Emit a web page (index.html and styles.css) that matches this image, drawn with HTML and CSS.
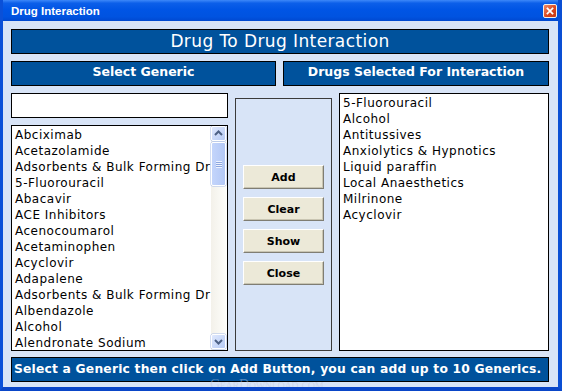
FILE: index.html
```html
<!DOCTYPE html>
<html lang="en">
<head>
    <meta charset="UTF-8">
    <title>Drug Interaction</title>
    <link rel="stylesheet" href="styles.css">
</head>
<body>
    <div class="window">
        <div class="titlebar">
            <span class="title">Drug Interaction</span>
            <span class="close-btn">
                <svg width="14" height="14" viewBox="0 0 14 14">
                    <path d="M4 4 L10 10 M10 4 L4 10" stroke="#fff" stroke-width="2" stroke-linecap="square"/>
                </svg>
            </span>
        </div>

        <div class="client">
            <div class="banner">Drug To Drug Interaction</div>

            <div class="captions">
                <div class="caption caption-left">Select Generic</div>
                <div class="caption caption-right">Drugs Selected For Interaction</div>
            </div>

            <div class="main">
                <div class="left-col">
                    <div class="search"></div>
                    <div class="listbox generic-list">
                        <ul class="items">
                            <li>Abciximab</li>
                            <li>Acetazolamide</li>
                            <li>Adsorbents &amp; Bulk Forming Dr</li>
                            <li>5-Fluorouracil</li>
                            <li>Abacavir</li>
                            <li>ACE Inhibitors</li>
                            <li>Acenocoumarol</li>
                            <li>Acetaminophen</li>
                            <li>Acyclovir</li>
                            <li>Adapalene</li>
                            <li>Adsorbents &amp; Bulk Forming Dr</li>
                            <li>Albendazole</li>
                            <li>Alcohol</li>
                            <li>Alendronate Sodium</li>
                        </ul>
                        <div class="scrollbar">
                            <div class="sb-btn">
                                <svg width="15" height="15" viewBox="0 0 15 15"><path d="M4 9 L7.5 5.5 L11 9" fill="none" stroke="#4d6185" stroke-width="2"/></svg>
                            </div>
                            <div class="sb-thumb">
                                <span class="grip"></span>
                            </div>
                            <div class="sb-track"></div>
                            <div class="sb-btn">
                                <svg width="15" height="15" viewBox="0 0 15 15"><path d="M4 6 L7.5 9.5 L11 6" fill="none" stroke="#4d6185" stroke-width="2"/></svg>
                            </div>
                        </div>
                    </div>
                </div>

                <div class="actions">
                    <button class="action-btn">Add</button>
                    <button class="action-btn">Clear</button>
                    <button class="action-btn">Show</button>
                    <button class="action-btn">Close</button>
                </div>

                <div class="listbox selected-list">
                    <ul class="items">
                        <li>5-Fluorouracil</li>
                        <li>Alcohol</li>
                        <li>Antitussives</li>
                        <li>Anxiolytics &amp; Hypnotics</li>
                        <li>Liquid paraffin</li>
                        <li>Local Anaesthetics</li>
                        <li>Milrinone</li>
                        <li>Acyclovir</li>
                    </ul>
                </div>
            </div>

            <div class="status">Select a Generic then click on Add Button, you can add up to 10 Generics.</div>
        </div>

        <div class="watermark">GearDownload.com</div>
    </div>
</body>
</html>
```

FILE: styles.css
```css
body {
    margin: 0;
    font-family: "DejaVu Sans", Verdana, sans-serif;
}
.window {
    position: relative;
    width: 562px;
    height: 391px;
    box-sizing: border-box;
    border-left: 3px solid #0a50d8;
    border-right: 4px solid #0a4fd4;
    border-bottom: 4px solid #0a46c8;
    background-color: #d8e4f7;
    overflow: hidden;
}
.titlebar {
    height: 21px;
    margin-left: -3px;
    margin-right: -4px;
    display: flex;
    align-items: center;
    justify-content: space-between;
    padding: 0 5px 0 11px;
    background: linear-gradient(#3d88f9 0%, #0c5fe9 15%, #0055e5 45%, #0053e0 80%, #0048d0 100%);
}
.title {
    color: white;
    font-family: "Liberation Sans", Arial, sans-serif;
    font-weight: bold;
    font-size: 11.5px;
    padding-top: 1px;
}
.close-btn {
    width: 14px;
    height: 14px;
    box-sizing: border-box;
    border: 1px solid #f4efe9;
    border-radius: 2px;
    background: linear-gradient(135deg, #f08a66, #d9441c 60%, #c53a14);
    display: flex;
    align-items: center;
    justify-content: center;
    margin-top: 1px;
}
.close-btn svg {
    width: 12px;
    height: 12px;
}
.client {
    height: 366px;
    box-sizing: border-box;
    padding: 8px 9px 0 8px;
}
.banner {
    height: 25px;
    box-sizing: border-box;
    border: 1px solid #000;
    background-color: #00529c;
    color: white;
    text-align: center;
    font-size: 17px;
    letter-spacing: 0.4px;
    line-height: 22px;
    margin-bottom: 7px;
}
.captions {
    display: flex;
    gap: 7px;
    margin-bottom: 7px;
}
.caption {
    height: 25px;
    box-sizing: border-box;
    border: 1px solid #000;
    background-color: #00529c;
    color: white;
    text-align: center;
    font-weight: bold;
    font-size: 12.5px;
    line-height: 20px;
}
.caption-left {
    width: 265px;
}
.caption-right {
    flex: 1;
}
.main {
    display: flex;
    gap: 7px;
    height: 258px;
}
.left-col {
    width: 217px;
    display: flex;
    flex-direction: column;
    gap: 7px;
}
.search {
    height: 25px;
    box-sizing: border-box;
    border: 1px solid #000;
    background-color: white;
}
.listbox {
    box-sizing: border-box;
    border: 1px solid #000;
    background-color: white;
    display: flex;
    overflow: hidden;
}
.generic-list {
    flex: 1;
}
.items {
    list-style: none;
    margin: 0;
    padding: 1px 0 0 3px;
    flex: 1;
    min-width: 0;
    font-size: 12px;
    letter-spacing: 0.5px;
    line-height: 16px;
    color: #000;
}
.items li {
    white-space: nowrap;
}
.scrollbar {
    width: 16px;
    display: flex;
    flex-direction: column;
    background: linear-gradient(to right, #f3f1ea, #fefefb);
}
.sb-btn {
    width: 15px;
    height: 15px;
    margin: 0 0 1px 0;
    box-sizing: border-box;
    border: 1px solid #ffffff;
    border-radius: 2px;
    background: linear-gradient(135deg, #dfe8fd, #b7cbf5);
    box-shadow: 0 0 0 0.5px #a9bde8;
}
.sb-btn svg {
    display: block;
    margin: -1px;
}
.sb-thumb {
    width: 15px;
    height: 44px;
    box-sizing: border-box;
    border: 1px solid #ffffff;
    border-radius: 2px;
    background: linear-gradient(to right, #c4d5fb, #b3c8f6);
    box-shadow: 0 0 0 0.5px #a9bde8;
    display: flex;
    align-items: center;
    justify-content: center;
}
.grip {
    width: 6px;
    height: 7px;
    background: repeating-linear-gradient(#eef3fe 0 1px, #8ca6df 1px 2px);
}
.sb-track {
    flex: 1;
}
.actions {
    width: 97px;
    margin-top: 5px;
    box-sizing: border-box;
    border: 1px solid #3b3b3b;
    display: flex;
    flex-direction: column;
    align-items: center;
    gap: 8px;
    padding-top: 66px;
}
.action-btn {
    width: 81px;
    height: 24px;
    box-sizing: border-box;
    background-color: #ece9d8;
    border: 1px solid;
    border-color: #ffffff #7f7d73 #7f7d73 #ffffff;
    box-shadow: inset -1px -1px #c9c5b2;
    font-family: "DejaVu Sans", Verdana, sans-serif;
    font-weight: bold;
    font-size: 11px;
    color: #000;
    padding: 0;
}
.selected-list {
    flex: 1;
}
.status {
    margin-top: 6px;
    height: 25px;
    box-sizing: border-box;
    border: 1px solid #000;
    background-color: #00529c;
    color: white;
    font-weight: bold;
    font-size: 12.3px;
    letter-spacing: 0.2px;
    line-height: 14px;
    padding: 4px 0 0 2px;
    white-space: nowrap;
}
.watermark {
    position: absolute;
    left: 207px;
    top: 380px;
    font-family: "Liberation Serif", serif;
    font-variant: small-caps;
    font-size: 14px;
    line-height: 10px;
    letter-spacing: -0.3px;
    color: rgba(190, 200, 220, 0.45);
}
```
